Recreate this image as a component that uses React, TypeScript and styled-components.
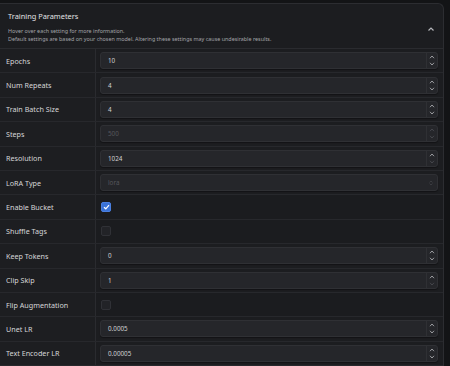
import React from "react";
import styled, { createGlobalStyle } from "styled-components";

const GlobalStyle = createGlobalStyle`
  html, body {
    margin: 0;
    padding: 0;
    background: #131416;
    font-family: "Noto Sans", "Open Sans", sans-serif;
  }
`;

type Field =
  | { kind: "number"; label: string; value: string; disabled?: boolean; upOnly?: boolean }
  | { kind: "select"; label: string; value: string }
  | { kind: "check"; label: string; checked: boolean };

const fields: Field[] = [
  { kind: "number", label: "Epochs", value: "10" },
  { kind: "number", label: "Num Repeats", value: "4" },
  { kind: "number", label: "Train Batch Size", value: "4" },
  { kind: "number", label: "Steps", value: "500", disabled: true },
  { kind: "number", label: "Resolution", value: "1024", upOnly: true },
  { kind: "select", label: "LoRA Type", value: "lora" },
  { kind: "check", label: "Enable Bucket", checked: true },
  { kind: "check", label: "Shuffle Tags", checked: false },
  { kind: "number", label: "Keep Tokens", value: "0" },
  { kind: "number", label: "Clip Skip", value: "1", upOnly: true },
  { kind: "check", label: "Flip Augmentation", checked: false },
  { kind: "number", label: "Unet LR", value: "0.0005" },
  { kind: "number", label: "Text Encoder LR", value: "0.00005" },
];

function Chevron({ up, dim }: { up: boolean; dim?: boolean }) {
  return (
    <svg width="6" height="4" viewBox="0 0 6 4">
      <path
        d={up ? "M1 3.2 L3 1 L5 3.2" : "M1 0.8 L3 3 L5 0.8"}
        fill="none"
        stroke={dim ? "#4a4b50" : "#a8a9ae"}
        strokeWidth="0.9"
      />
    </svg>
  );
}

function FieldControl({ field }: { field: Field }) {
  if (field.kind === "check") {
    return (
      <CheckCell>
        <CheckBox checked={field.checked}>
          {field.checked && (
            <svg width="7" height="6" viewBox="0 0 7 6">
              <path d="M1 3.2 L2.8 4.8 L6 1.2" fill="none" stroke="#fff" strokeWidth="1.2" />
            </svg>
          )}
        </CheckBox>
      </CheckCell>
    );
  }
  if (field.kind === "select") {
    return (
      <InputCell>
        <InputBox>
          <Value muted>{field.value}</Value>
          <SelectArrows>
            <Chevron up dim />
            <Chevron up={false} dim />
          </SelectArrows>
        </InputBox>
      </InputCell>
    );
  }
  return (
    <InputCell>
      <InputBox>
        <Value muted={field.disabled}>{field.value}</Value>
        <Spinner>
          <Chevron up dim={field.disabled} />
          <Chevron up={false} dim={field.disabled || field.upOnly} />
        </Spinner>
      </InputBox>
    </InputCell>
  );
}

export default function App() {
  return (
    <>
      <GlobalStyle />
      <Page>
        <Card>
          <Header>
            <HeaderText>
              <Title>Training Parameters</Title>
              <Description>Hover over each setting for more information.</Description>
              <Description>
                Default settings are based on your chosen model. Altering these settings may cause undesirable results.
              </Description>
            </HeaderText>
            <Collapse>
              <svg width="8" height="6" viewBox="0 0 8 6">
                <path d="M1.5 4.5 L4 2 L6.5 4.5" fill="none" stroke="#b5b6ba" strokeWidth="1.2" />
              </svg>
            </Collapse>
          </Header>
          <Table>
            {fields.map((f) => (
              <Row key={f.label}>
                <Label>{f.label}</Label>
                <FieldControl field={f} />
              </Row>
            ))}
          </Table>
        </Card>
      </Page>
    </>
  );
}

const Page = styled.div`
  width: 450px;
  height: 366px;
  overflow: hidden;
  padding: 3px 6px 0 0;
  box-sizing: border-box;
`;

const Card = styled.div`
  background: #1c1d20;
  border: 1px solid #2c2d31;
  border-left: none;
  border-bottom: none;
  border-radius: 0 6px 0 0;
`;

const Header = styled.div`
  display: flex;
  align-items: center;
  height: 45px;
  padding: 2px 8px 0 8px;
  box-sizing: border-box;
  border-bottom: 1px solid #2a2b2f;
`;

const HeaderText = styled.div`
  flex: 1;
  display: flex;
  flex-direction: column;
`;

const Title = styled.div`
  font-size: 7.4px;
  color: #e2e2e4;
  margin-bottom: 6px;
  line-height: 10px;
`;

const Description = styled.div`
  font-size: 5.4px;
  color: #a3a4a8;
  line-height: 8px;
  white-space: nowrap;
`;

const Collapse = styled.div`
  display: flex;
  align-items: center;
  padding-top: 3px;
`;

const Table = styled.div`
  display: flex;
  flex-direction: column;
`;

const Row = styled.div`
  display: grid;
  grid-template-columns: 96px 1fr;
  height: 24.4px;
  border-bottom: 1px solid #27282c;
  box-sizing: border-box;
`;

const Label = styled.div`
  display: flex;
  align-items: center;
  padding-left: 6px;
  font-size: 7.2px;
  color: #d6d6d8;
  border-right: 1px solid #2a2b2f;
  background: #1d1e21;
`;

const InputCell = styled.div`
  display: flex;
  align-items: center;
  padding: 0 5px 0 4px;
`;

const CheckCell = styled.div`
  display: flex;
  align-items: center;
  padding-left: 5px;
  background: #1b1c1f;
`;

const InputBox = styled.div`
  flex: 1;
  height: 17px;
  display: flex;
  align-items: center;
  background: #25262a;
  border: 1px solid #2f3034;
  border-radius: 3px;
  box-sizing: border-box;
  box-shadow: 0 1px 1px rgba(0, 0, 0, 0.35);
`;

const Value = styled.div<{ muted?: boolean }>`
  flex: 1;
  padding-left: 7px;
  font-size: 6.3px;
  color: ${({ muted }) => (muted ? "#56575c" : "#d0d0d3")};
`;

const Spinner = styled.div`
  width: 10px;
  height: 100%;
  display: flex;
  flex-direction: column;
  align-items: center;
  justify-content: center;
  gap: 3px;
  border-left: 1px solid #2f3034;
`;

const SelectArrows = styled.div`
  width: 12px;
  display: flex;
  flex-direction: column;
  align-items: center;
  transform: scale(0.7);
`;

const CheckBox = styled.div<{ checked: boolean }>`
  width: 10px;
  height: 10px;
  box-sizing: border-box;
  border-radius: 2px;
  display: flex;
  align-items: center;
  justify-content: center;
  background: ${({ checked }) => (checked ? "#3a72d6" : "#222327")};
  border: 1px solid ${({ checked }) => (checked ? "#4a7fe0" : "#303136")};
`;
